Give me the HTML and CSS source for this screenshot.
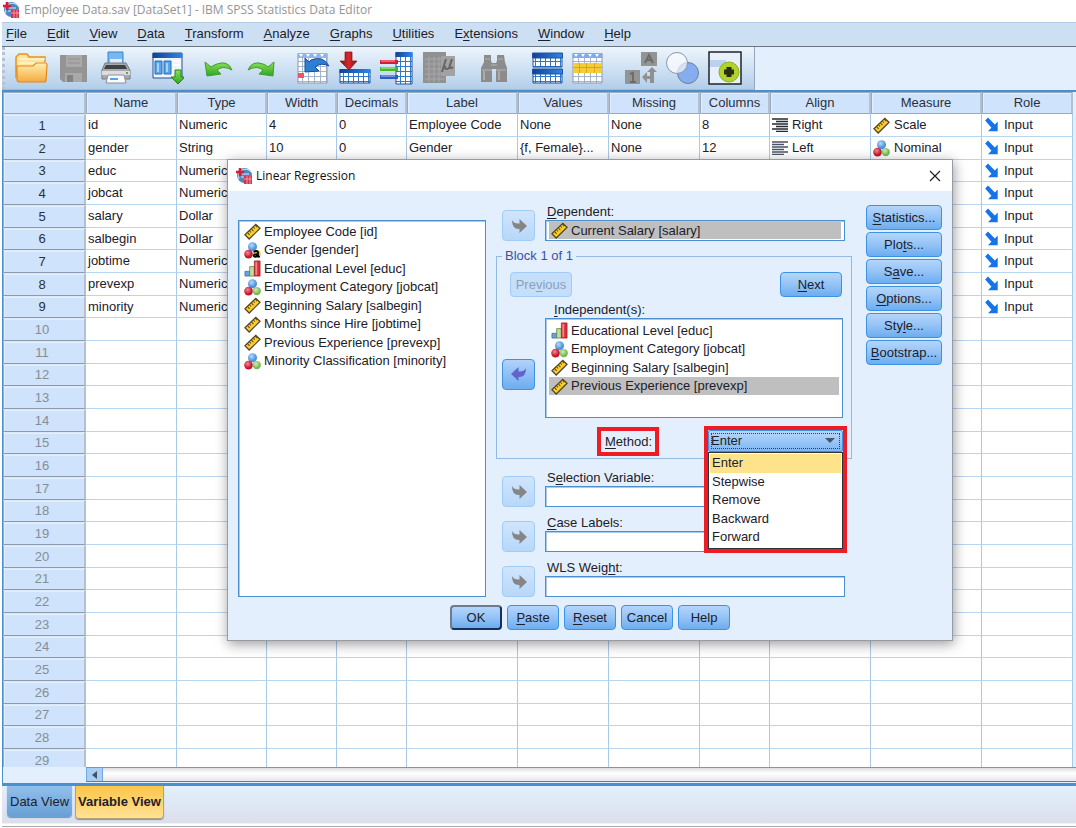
FILE: index.html
```html
<!DOCTYPE html>
<html lang="en">
<head>
<meta charset="utf-8">
<title>Employee Data.sav [DataSet1] - IBM SPSS Statistics Data Editor</title>
<link rel="stylesheet" href="styles.css">
</head>
<body>
<svg class="sprite" aria-hidden="true">
  <defs>
    <linearGradient id="g-blue" x1="0" x2="1"><stop offset="0" stop-color="#143f94"/><stop offset="1" stop-color="#2d86e8"/></linearGradient>
    <linearGradient id="g-gold" x1="0" x2="0" y1="0" y2="1"><stop offset="0" stop-color="#fff0b0"/><stop offset="1" stop-color="#f5a93c"/></linearGradient>
    <linearGradient id="g-green" x1="0" x2="0" y1="0" y2="1"><stop offset="0" stop-color="#8be05a"/><stop offset="1" stop-color="#2fa51f"/></linearGradient>
    <linearGradient id="g-red" x1="0" x2="1"><stop offset="0" stop-color="#7e1414"/><stop offset=".5" stop-color="#d8262c"/><stop offset="1" stop-color="#8c1818"/></linearGradient>
    <radialGradient id="g-rball" cx=".4" cy=".35"><stop offset="0" stop-color="#f08a8a"/><stop offset="1" stop-color="#c3152c"/></radialGradient>
    <radialGradient id="g-bball" cx=".4" cy=".35"><stop offset="0" stop-color="#b5dbfb"/><stop offset="1" stop-color="#4c93dd"/></radialGradient>
    <radialGradient id="g-gball" cx=".4" cy=".35"><stop offset="0" stop-color="#d0efb0"/><stop offset="1" stop-color="#74b853"/></radialGradient>
    <pattern id="p-grid" width="5" height="5" patternUnits="userSpaceOnUse"><path d="M0 0h5v5h-5z" fill="#fff"/><path d="M0 .5h5M.5 0v5" stroke="#2f78cc"/></pattern>
    <pattern id="p-light" width="6" height="5" patternUnits="userSpaceOnUse"><path d="M0 0h6v5h-6z" fill="#fff"/><path d="M0 .5h6M.5 0v5" stroke="#a3b4cc"/></pattern>
  </defs>
  <symbol id="i-app" viewBox="0 0 18 18">
    <circle cx="9.500" cy="8.500" r="7.500" fill="#4f86c0"/><path d="M4 12a7 7 0 0 1 12-7M7 7h7M6 10h5" stroke="#d5e8f8" fill="none"/>
    <path d="M5 1v8M1 5h8" stroke="#d31f33" stroke-width="2.500"/><path d="M9 9h8v8H9z" fill="#d2334c"/><path d="M9 12h8M12 9v8M15 9v8" stroke="#f5b0bb" stroke-width=".8"/>
  </symbol>
  <symbol id="i-scale" viewBox="0 0 18 18">
    <path d="M1 12.500 12.500 1.500 17 5.500 5.500 17z" fill="#ffce2e" stroke="#4f4524" stroke-width="1.300"/>
    <path d="m4 10.500 2 2m0-4 1.500 1.500M8 6.500l2 2m0-4 1.500 1.500M12 2.500l2 2" stroke="#5b4a12" stroke-width="1.100"/>
  </symbol>
  <symbol id="i-nominal" viewBox="0 0 18 18">
    <circle cx="9" cy="5" r="4.800" fill="url(#g-bball)"/><circle cx="4.800" cy="12.800" r="4.600" fill="url(#g-rball)"/><circle cx="13.500" cy="12.800" r="4.400" fill="url(#g-gball)"/>
  </symbol>
  <symbol id="i-string" viewBox="0 0 18 18">
    <circle cx="9" cy="5" r="4.800" fill="url(#g-bball)"/><circle cx="4.800" cy="12.800" r="4.600" fill="url(#g-rball)"/><circle cx="13.500" cy="12.800" r="4.200" fill="#e5c25a"/>
    <path d="M10.300 10.500q2.700-2 4.500 0v5.700M14.800 13q-4.800-.3-4.600 1.700 1.200 2.300 4.600-.4l1.700 2" fill="none" stroke="#000" stroke-width="1.900"/>
  </symbol>
  <symbol id="i-ordinal" viewBox="0 0 18 18">
    <path d="M1 12h5v5H1z" fill="#69a3dd" stroke="#3d6a99" stroke-width=".8"/><path d="M6 7h5v10H6z" fill="#bfe09d" stroke="#5d7d45" stroke-width=".8"/><path d="M11 1h6v16h-6z" fill="#dd2c35" stroke="#9a2129" stroke-width=".8"/><path d="M12 2h2v14h-2z" fill="#f3868a"/>
  </symbol>
  <symbol id="i-input" viewBox="0 0 14 14">
    <path d="M1 3 3.500.5l6 6L12 4v8.500H3.500L6.500 9.500z" fill="#1674ea"/>
  </symbol>
  <symbol id="i-right" viewBox="0 0 16 14">
    <path d="M0 1h16M4 3.500h12M0 6h16M4 8.500h12M0 11h16M4 13.500h12" stroke="#252b33" stroke-width="1.300"/>
  </symbol>
  <symbol id="i-left" viewBox="0 0 16 14">
    <path d="M0 1h16M0 3.500h12M0 6h16M0 8.500h12M0 11h16M0 13.500h12" stroke="#4a5463" stroke-width="1.300"/>
  </symbol>
  <symbol id="i-move" viewBox="0 0 16 14">
    <path d="M1 1q2 4 7.500 3.500V0L16 7l-7.500 7V10Q1 10.500 1 1z" fill="currentColor"/>
  </symbol>
</svg>

<header class="titlebar">
  <svg class="app-icon" aria-hidden="true"><use href="#i-app"/></svg>
  <h1 class="window-title">Employee Data.sav [DataSet1] - IBM SPSS Statistics Data Editor</h1>
</header>

<main class="workspace">
  <nav class="menubar" aria-label="Main menu">
    <button class="menu"><u>F</u>ile</button><button class="menu"><u>E</u>dit</button><button class="menu"><u>V</u>iew</button><button class="menu"><u>D</u>ata</button><button class="menu"><u>T</u>ransform</button><button class="menu"><u>A</u>nalyze</button><button class="menu"><u>G</u>raphs</button><button class="menu"><u>U</u>tilities</button><button class="menu">E<u>x</u>tensions</button><button class="menu"><u>W</u>indow</button><button class="menu"><u>H</u>elp</button>
  </nav>

  <div class="toolbar-row">
    <div class="toolbar" role="toolbar" aria-label="Data editor tools">
      <div class="tools">
        <button class="tool" aria-label="Open"><svg viewBox="0 0 34 34"><path d="M2 27V6l3-3h8l2 3h16v7" fill="#ffe5a0" stroke="#e8921c" stroke-width="1.500"/><path d="M5 12h27M5 8h26" stroke="#fff4cd" stroke-width="1.500"/><path d="M3 15h16l3-3h10q1 0 1 2l-1 15q0 2-2 2H5q-2 0-2-3z" fill="url(#g-gold)" stroke="#e8861a" stroke-width="1.200"/></svg></button>
        <button class="tool" aria-label="Save" disabled><svg viewBox="0 0 34 34"><path d="M4 4h27v27H7l-3-3z" fill="#949494"/><path d="M10 4h16v12H10zM9 22h17v9H9z" fill="#a9a9a9"/><path d="M11 24h6v7h-6z" fill="#828282"/><path d="M12 8h12M12 12h12" stroke="#919191"/></svg></button>
        <button class="tool" aria-label="Print"><svg viewBox="0 0 34 34"><path d="M10 1h15v14H10z" fill="#79b7ee" stroke="#3585cd"/><path d="M12 8h12v7H12z" fill="#d9eefd"/><path d="M7 12h21l4 7v9H4v-9z" fill="#a9abae" stroke="#77797d"/><path d="M8 14h19l2 4H6z" fill="#3e4247"/><path d="M4 20h28v4H4z" fill="#dcdddf"/><path d="M10 24h16l2 8H8z" fill="#f8fafc" stroke="#8b9097"/><path d="M12 28h8" stroke="#58a4e3" stroke-width="2"/><path d="M28 22h2" stroke="#4cae4c" stroke-width="2"/></svg></button>
      </div>
      <div class="tools">
        <button class="tool" aria-label="Recall recent dialog"><svg viewBox="0 0 34 34"><path d="M3 2h29v25H3z" fill="#eef5fc" stroke="#284f8f"/><path d="M2.500 2h30v5h-30z" fill="url(#g-blue)"/><path d="M5 10h7v13H5zM14 10h7v13h-7z" fill="#57a4e8" stroke="#2c6dbb"/><path d="M7 12h2v9H7zM16 12h2v9h-2z" fill="#a7d3f6"/><path d="M23 10h7M23 14h7" stroke="#fff" stroke-width="2"/><path d="M25 19h6v7h4l-7 7-7-7h4z" fill="url(#g-green)" stroke="#298018"/></svg></button>
      </div>
      <div class="tools">
        <button class="tool" aria-label="Undo"><svg viewBox="0 0 34 34"><path d="M3 11l2 14 14-2-4-4q6-5 15 0-4-10-15-6-3 1-6 3z" fill="url(#g-green)" stroke="#3f9d2e"/></svg></button>
        <button class="tool" aria-label="Redo"><svg viewBox="0 0 34 34"><path d="M30 11l-1 14-14-2 4-4q-6-5-15 0 4-10 15-6 3 1 5 3z" fill="url(#g-green)" stroke="#3f9d2e"/></svg></button>
      </div>
      <div class="tools">
        <button class="tool" aria-label="Go to case"><svg viewBox="0 0 34 34"><path d="M2 3h29v29H2z" fill="url(#p-light)" stroke="#9099ad"/><path d="M1.500 2h30v5h-30z" fill="#8fb5f0"/><path d="M3 3h4l-2 3zm7 0h4l-2 3zm7 0h4l-2 3zm7 0h4l-2 3z" fill="#fff"/><path d="M2 22h6v5H2z" fill="#ee5757"/><path d="M9 7v14l14-1-4-4q6-5 14-1-6-11-18-6l-2 2z" fill="#2e7ed4" stroke="#1a4c94"/></svg></button>
        <button class="tool" aria-label="Go to variable"><svg viewBox="0 0 34 34"><path d="M2 19h30v13H2z" fill="url(#p-grid)" stroke="#1e51a0"/><path d="M1.500 18h31v4h-31z" fill="url(#g-blue)"/><path d="M7 1h7v9h5l-8 9-9-9h5z" fill="url(#g-red)" stroke="#7b1717" stroke-width=".7"/></svg></button>
        <button class="tool" aria-label="Variables"><svg viewBox="0 0 34 34"><path d="M16 2h16v31H16z" fill="url(#p-grid)" stroke="#1e51a0"/><path d="M15.500 1h17v5h-17z" fill="url(#g-blue)"/><path d="M0 9h18v4H0z" fill="#d51d35"/><path d="M0 16h18v4H0z" fill="#45b92c"/><path d="M0 24h18v4H0z" fill="#2e5fc0"/><path d="M1 10h14" stroke="#f9a6ae"/><path d="M1 17h14" stroke="#c2f4a5"/><path d="M1 25h14" stroke="#a8c4f6"/></svg></button>
        <button class="tool" aria-label="Run descriptive statistics" disabled><svg viewBox="0 0 34 34"><path d="M1 1h23v31H1z" fill="#919191"/><path d="M3 8h20M3 13h20M3 18h20M3 23h20M3 28h20M7 6v25M12 6v25M17 6v25" stroke="#a8a8a8"/><path d="M19 5h14v20H19z" fill="#a2a2a2"/><path d="M24 8l-4 13m3-6q0 5 4 2l3-9m-2 6q-1 5 3 2" fill="none" stroke="#666" stroke-width="2"/></svg></button>
      </div>
      <div class="tools tools-single">
        <button class="tool" aria-label="Find" disabled><svg viewBox="0 0 34 34"><path d="M8 4h7v6l1 2h4l1-2V4h7l1 7 2 6v14H20V18h-4v13H5V17l3-6z" fill="#8c8c8c"/><path d="M6 19h10M20 19h10M9 8h5M22 8h5M15 14h6" stroke="#b5b5b5"/><path d="M8 20v9M23 20v9" stroke="#aaa" stroke-width="2"/></svg></button>
      </div>
      <div class="tools">
        <button class="tool" aria-label="Split file"><svg viewBox="0 0 34 34"><path d="M3 5h29v11H3zM3 22h29v10H3z" fill="url(#p-grid)" stroke="#21549e"/><path d="M2.500 2h30v5h-30zM2.500 18h30v5h-30z" fill="url(#g-blue)" stroke="#21549e"/></svg></button>
        <button class="tool" aria-label="Select cases"><svg viewBox="0 0 34 34"><path d="M1 3h29v29H1z" fill="url(#p-light)" stroke="#9099ad"/><path d="M.5 2h30v5h-30z" fill="#7faaf0"/><path d="M2 3h4l-2 3zm7 0h4l-2 3zm7 0h4l-2 3zm7 0h4l-2 3z" fill="#fff"/><path d="M1 12h29v10H1z" fill="#f4cc35"/><path d="M1 16.500h29M7.500 12v10M14.500 12v10M22.500 12v10" stroke="#dba71a"/></svg></button>
      </div>
      <div class="tools">
        <button class="tool" aria-label="Value labels" disabled><svg viewBox="0 0 34 34"><path d="M17 1h16v14H17zM1 19h15v14H1z" fill="#949494"/><path d="M21 12l4-8 4 8m-7-3h6M6 23l3-1v9m-3 0h6" stroke="#6c6c6c" stroke-width="2" fill="none"/><path d="M28 16l5 5h-3v11h-4v-4h-3v4l-5-6 5-5v4h3v-4h-3z" fill="#909090"/></svg></button>
        <button class="tool" aria-label="Use variable sets"><svg viewBox="0 0 34 34"><circle cx="22" cy="22" r="10.500" fill="#86adf0" stroke="#6a7f9f"/><circle cx="11" cy="12" r="10.500" fill="#fff" fill-opacity=".65" stroke="#8b98a9"/></svg></button>
        <button class="tool" aria-label="Customize toolbar"><svg viewBox="0 0 34 34"><path d="M1 1h32v32H1z" fill="#e8f0fa" stroke="#20232c" stroke-width="1.500"/><path d="M2 9h16v7H2z" fill="#b9d3ee"/><circle cx="21" cy="21" r="10" fill="#b2d12c" stroke="#8db026"/><path d="M21 16v10M16 21h10" stroke="#26300e" stroke-width="5"/></svg></button>
      </div>
    </div>
  </div>

  <div class="grid-area">
    <table class="grid">
      <colgroup><col class="w-num"><col class="w-90"><col class="w-89"><col class="w-70"><col class="w-70"><col class="w-110"><col class="w-90"><col class="w-90"><col class="w-70"><col class="w-100"><col class="w-110"><col class="w-90"><col></colgroup>
      <thead>
        <tr><th></th><th>Name</th><th>Type</th><th>Width</th><th>Decimals</th><th>Label</th><th>Values</th><th>Missing</th><th>Columns</th><th>Align</th><th>Measure</th><th>Role</th><td class="filler"></td></tr>
      </thead>
      <tbody id="variables"></tbody>
    </table>
  </div>

  <div class="scroll-row">
    <div class="scrollbar"><button class="scroll-left" aria-label="Scroll left"></button><div class="scroll-thumb"></div></div>
  </div>

  <footer class="views" role="tablist">
    <button class="view" role="tab" aria-selected="false">Data View</button>
    <button class="view view-active" role="tab" aria-selected="true">Variable View</button>
  </footer>
</main>

<section class="dialog" role="dialog" aria-labelledby="dialog-title">
  <header class="dialog-head">
    <svg class="app-icon" aria-hidden="true"><use href="#i-app"/></svg>
    <h2 class="dialog-title" id="dialog-title">Linear Regression</h2>
    <button class="close" aria-label="Close"><svg viewBox="0 0 12 12"><path d="m1 1 10 10M11 1 1 11" stroke="#222" stroke-width="1.200"/></svg></button>
  </header>
  <div class="dialog-body">
    <ul class="list source" aria-label="Variables">
      <li><svg class="icon"><use href="#i-scale"/></svg>Employee Code [id]</li>
      <li><svg class="icon"><use href="#i-string"/></svg>Gender [gender]</li>
      <li><svg class="icon"><use href="#i-ordinal"/></svg>Educational Level [educ]</li>
      <li><svg class="icon"><use href="#i-nominal"/></svg>Employment Category [jobcat]</li>
      <li><svg class="icon"><use href="#i-scale"/></svg>Beginning Salary [salbegin]</li>
      <li><svg class="icon"><use href="#i-scale"/></svg>Months since Hire [jobtime]</li>
      <li><svg class="icon"><use href="#i-scale"/></svg>Previous Experience [prevexp]</li>
      <li><svg class="icon"><use href="#i-nominal"/></svg>Minority Classification [minority]</li>
    </ul>

    <div class="fields">
      <div class="field-row">
        <button class="move" aria-label="Move to Dependent" disabled><svg><use href="#i-move"/></svg></button>
        <div class="field">
          <span class="label" id="l-dep"><u>D</u>ependent:</span>
          <div class="box" aria-labelledby="l-dep"><span class="chosen"><svg class="icon"><use href="#i-scale"/></svg>Current Salary [salary]</span></div>
        </div>
      </div>

      <fieldset class="block">
        <legend>Block 1 of 1</legend>
        <div class="block-nav">
          <button class="btn btn-nav" disabled>Pre<u>v</u>ious</button>
          <button class="btn btn-nav"><u>N</u>ext</button>
        </div>
        <div class="field-row middle">
          <button class="move move-active" aria-label="Remove from Independent"><svg><use href="#i-move"/></svg></button>
          <div class="field">
            <span class="label label-indent" id="l-ind"><u>I</u>ndependent(s):</span>
            <ul class="list targets" aria-labelledby="l-ind">
              <li><svg class="icon"><use href="#i-ordinal"/></svg>Educational Level [educ]</li>
              <li><svg class="icon"><use href="#i-nominal"/></svg>Employment Category [jobcat]</li>
              <li><svg class="icon"><use href="#i-scale"/></svg>Beginning Salary [salbegin]</li>
              <li class="selected"><svg class="icon"><use href="#i-scale"/></svg>Previous Experience [prevexp]</li>
            </ul>
          </div>
        </div>
        <div class="method">
          <label class="method-label" for="method"><u>M</u>ethod:</label>
          <div class="combo">
            <select id="method" class="select"><option>Enter</option><option>Stepwise</option><option>Remove</option><option>Backward</option><option>Forward</option></select>
            <ul class="options" role="listbox" aria-label="Method options">
              <li class="current" role="option" aria-selected="true">Enter</li><li role="option">Stepwise</li><li role="option">Remove</li><li role="option">Backward</li><li role="option">Forward</li>
            </ul>
          </div>
        </div>
      </fieldset>

      <div class="extra">
        <div class="field-row">
          <button class="move" aria-label="Move to Selection Variable" disabled><svg><use href="#i-move"/></svg></button>
          <div class="field"><label class="label" for="f-sel">S<u>e</u>lection Variable:</label><input class="box" id="f-sel" type="text"></div>
        </div>
        <div class="field-row">
          <button class="move" aria-label="Move to Case Labels" disabled><svg><use href="#i-move"/></svg></button>
          <div class="field"><label class="label" for="f-case"><u>C</u>ase Labels:</label><input class="box" id="f-case" type="text"></div>
        </div>
        <div class="field-row">
          <button class="move" aria-label="Move to WLS Weight" disabled><svg><use href="#i-move"/></svg></button>
          <div class="field"><label class="label" for="f-wls">WLS Weig<u>h</u>t:</label><input class="box" id="f-wls" type="text"></div>
        </div>
      </div>
    </div>

    <div class="side">
      <button class="btn"><u>S</u>tatistics...</button>
      <button class="btn">Plo<u>t</u>s...</button>
      <button class="btn">S<u>a</u>ve...</button>
      <button class="btn"><u>O</u>ptions...</button>
      <button class="btn">Sty<u>l</u>e...</button>
      <button class="btn"><u>B</u>ootstrap...</button>
    </div>
  </div>
  <footer class="dialog-foot">
    <button class="btn btn-default">OK</button>
    <button class="btn"><u>P</u>aste</button>
    <button class="btn"><u>R</u>eset</button>
    <button class="btn">Cancel</button>
    <button class="btn">Help</button>
  </footer>
</section>
<script src="grid.js"></script>
</body>
</html>
```

FILE: styles.css
```css
* { box-sizing: border-box; }

body {
  margin: 0;
  height: 100vh;
  display: flex;
  flex-direction: column;
  position: relative;
  overflow: hidden;
  background: #fff;
  color: #1c2029;
  font: 13px/16px "Liberation Sans", Arial, sans-serif;
}

button, input, select { font: inherit; color: inherit; margin: 0; padding: 0; }
button { border: 0; background: none; white-space: nowrap; }
ul { margin: 0; padding: 0; list-style: none; }
u { text-underline-offset: 2px; }
.sprite { position: absolute; width: 0; height: 0; }

/* Window frame */
.titlebar { display: flex; align-items: center; gap: 4px; height: 22px; padding: 0 2px 2px; }
.app-icon { width: 18px; height: 18px; flex: none; }
.window-title, .dialog-title { margin: 0; font: 12px/18px "Open Sans", "Noto Sans", sans-serif; }
.window-title { color: #949494; }
.workspace { flex: 1; min-height: 0; display: flex; flex-direction: column; padding: 0 0 1px 2px; }

.menubar {
  display: flex;
  gap: 20px;
  height: 25px;
  padding: 0 4px 1px;
  background: #cde0f3;
  border-top: 1px solid #b5cbe2;
  border-bottom: 1px solid #6d7580;
}

.toolbar-row { background: #e3effc; }
.toolbar {
  display: inline-flex;
  align-items: center;
  gap: 18px;
  height: 43px;
  vertical-align: top;
  padding: 0 12px 0 9px;
  border-left: 3px dotted #b4c3d4;
  border-right: 1px solid #97a7bb;
  border-bottom: 1px solid #a9bacd;
  background: linear-gradient(#edf5fd, #b3cee9);
}
.tools { display: flex; gap: 8px; }
.tools-single { padding: 0 2px; }
.tool { width: 34px; height: 34px; }
.tool svg { display: block; width: 34px; height: 34px; }

/* Variable grid */
.grid-area {
  flex: 1;
  min-height: 0;
  overflow: hidden;
  border-top: 2px solid #4a8fd0;
  border-left: 1px solid #4a8fd0;
  background: #e3effc;
}
.grid { width: 100%; table-layout: fixed; border-collapse: separate; border-spacing: 0; }
.w-num { width: 83px; }
.w-70 { width: 70px; }
.w-89 { width: 90px; }
.w-90 { width: 91px; }
.w-100 { width: 101px; }
.w-110 { width: 111px; }
.grid th {
  height: 22px;
  padding: 0;
  font-weight: normal;
  color: #2a303c;
  background: #cfe3fc;
  border: 1px solid #9ca9ba;
  border-right-width: 2px;
  border-right-color: #b1c1d3;
  box-shadow: inset 1px 1px #e3effc;
}
.grid td {
  padding: 0 2px;
  white-space: nowrap;
  overflow: hidden;
  background: #fff;
  border-right: 1px solid #a9c9e8;
  border-bottom: 1px solid #b9d6ef;
}
.grid tbody tr { height: 23px; }
.grid tbody tr:nth-child(3n) { height: 22px; }
.grid tbody th { height: auto; padding-right: 4px; border-top-color: #dbe8f6; border-bottom-color: #8c9aad; }
.grid .empty th { color: #858d98; }
.grid .filler { background: #e3effc; border: 0; padding: 0; }
.grid .with-icon { display: flex; align-items: center; gap: 4px; height: 16px; }
.glyph { width: 16px; height: 14px; }
.arrow { width: 16px; height: 16px; }
.icon { width: 17px; height: 17px; flex: none; }

.scroll-row { height: 16px; padding-left: 83px; background: #e3effc; border-left: 1px solid #4a8fd0; }
.scrollbar { display: flex; height: 15px; border-top: 1px solid #5d9ddb; border-bottom: 1px solid #6b7b8e; }
.scroll-left { display: grid; place-items: center; width: 17px; background: #a9cdf3; border: 1px solid #6ea9e3; border-width: 0 1px; }
.scroll-left::before { content: ""; border: 4px solid transparent; border-right: 5px solid #405266; border-left: 0; }
.scroll-thumb { flex: 1; background: linear-gradient(#dedede, #fff 40%, #e6e6e6); }

.views {
  display: flex;
  align-items: flex-start;
  gap: 3px;
  height: 44px;
  padding: 0 5px;
  border-top: 3px solid #4a8fd0;
  border-bottom: 1px solid #a4a8b0;
  background: linear-gradient(#e3f0fd, #dcdeeb 92%, #fff 95%);
}
.view { height: 31px; padding: 0 3px; background: linear-gradient(#92c0ea, #689fd4); border-radius: 0 0 4px 4px; box-shadow: 0 1px 1px #7595b7; }
.view-active { height: 33px; padding: 0 2px; font-weight: bold; background: linear-gradient(#fdc548, #ffe195); border: 1px solid #b7a276; border-top: 0; }

/* Linear Regression dialog */
.dialog {
  position: absolute;
  left: 227px;
  top: 159px;
  width: 726px;
  border: 1px solid #969ca4;
  background: #e3effc;
  box-shadow: 1px 3px 12px rgba(0, 0, 0, .4);
}
.dialog-head { display: flex; align-items: center; gap: 3px; height: 31px; padding: 0 11px 0 7px; background: #fff; }
.dialog-title { color: #111; }
.close { margin-left: auto; width: 12px; height: 12px; }
.close svg { display: block; }
.dialog-body { display: grid; grid-template-columns: 248px 1fr 76px; padding: 13px 10px 0; }

.list { background: #fff; border: 1px solid #4a8fd0; box-shadow: inset 1px 1px #a6cbee; padding: 2px 3px; }
.list li { display: flex; align-items: center; gap: 3px; height: 19px; padding-left: 2px; white-space: nowrap; }
.list li:nth-child(even) { height: 18px; }
.list .selected { background: #bfbfbf; }
.source { margin-top: 16px; padding-top: 1px; }

.fields { margin: 0 14px 0 10px; }
.field-row { display: flex; align-items: flex-end; gap: 10px; padding: 0 7px 0 6px; }
.field { flex: 1; min-width: 0; display: flex; flex-direction: column; }
.label { line-height: 16px; padding-left: 2px; }
.label-indent { padding-left: 9px; }
.box { width: 100%; height: 21px; padding: 1px 3px; background: #fff; border: 1px solid #4a8fd0; border-radius: 0; box-shadow: inset 1px 1px #a6cbee; }
.chosen { display: flex; align-items: center; gap: 3px; height: 17px; padding-left: 2px; background: #bfbfbf; }

.move {
  display: grid;
  place-items: center;
  width: 33px;
  height: 31px;
  flex: none;
  border: 1px solid #9fcdf7;
  border-radius: 4px;
  background: linear-gradient(#d0e5fd, #b7d7f9);
  color: #858585;
}
.move svg { width: 16px; height: 14px; }
.move-active { border-color: #3d92e4; background: linear-gradient(#b1d3fa, #6cadf0); color: #6463cc; }
.move-active svg { transform: scaleX(-1); }

.block { min-width: 0; margin: 7px 0 0; padding: 8px 8px 6px 0; border: 1px solid #93bbe2; }
.block legend { margin-left: 5px; padding: 0 3px; color: #3a4fa6; }
.block-nav { display: flex; justify-content: space-between; padding: 0 1px 0 13px; }
.block .field-row { padding: 5px 0 0 5px; }
.middle .move { align-self: center; margin-top: 28px; }
.block .middle { align-items: stretch; }
.targets { height: 100px; }
.method { display: flex; align-items: center; justify-content: flex-end; gap: 45px; margin: 8px 0 -4px; }
.method-label { border: 4px solid #ee1c25; padding: 3px 3px 2px 4px; }
.combo { position: relative; width: 143px; height: 30px; margin-right: -4px; padding: 4px 4px 0; }
.combo::after { content: ""; position: absolute; inset: 0 0 -97px; border: 4px solid #ee1c25; z-index: 2; pointer-events: none; }
.select {
  display: block;
  width: 100%;
  height: 22px;
  padding: 0 2px;
  appearance: none;
  border: 1px solid #3d92e4;
  border-radius: 2px;
  outline: 1px dotted #24436b;
  outline-offset: -4px;
  background: linear-gradient(to bottom, #b8d7fb, #7db6f2);
}
.combo::before { content: ""; position: absolute; right: 12px; top: 12px; border: 5px solid transparent; border-top-color: #4b5563; border-bottom: 0; }
.options { position: absolute; left: 4px; right: 4px; top: 26px; z-index: 1; padding: 1px; background: #fff; border: 1px solid #2c3138; }
.options li { height: 19px; padding: 1px 2px; }
.options li:nth-child(even) { height: 18px; }
.options .current { background: #ffe38a; }

.extra { display: grid; gap: 8px; margin-top: 11px; }

.side { display: grid; gap: 2px; align-content: start; padding-top: 1px; }
.btn {
  height: 25px;
  border: 1px solid #3d92e4;
  border-radius: 4px;
  background: linear-gradient(#b4d5fb, #94c3f6 50%, #6cadf0);
}
.btn:disabled { color: #8ba0b8; border-color: #9fcdf7; background: #c5dffb; }
.btn-nav { width: 62px; }
.dialog-foot { display: flex; justify-content: center; gap: 5px; padding: 8px 0 10px; }
.dialog-foot .btn { width: 52px; }
.dialog-foot .btn-default { border: 2px solid #16305c; border-top-color: #6f7b8c; border-left-color: #6f7b8c; }
```

FILE: grid.js
```js
const withIcon = (name, cls, text) =>
  `<span class="with-icon"><svg class="${cls}" aria-hidden="true"><use href="#i-${name}"/></svg>${text}</span>`;
const input = withIcon("input", "arrow", "Input");
const rows = [
  ["id", "Numeric", "4", "0", "Employee Code", "None", "None", "8", withIcon("right", "glyph", "Right"), withIcon("scale", "icon", "Scale"), input],
  ["gender", "String", "10", "0", "Gender", "{f, Female}...", "None", "12", withIcon("left", "glyph", "Left"), withIcon("nominal", "icon", "Nominal"), input],
  ...[["educ", "Numeric"], ["jobcat", "Numeric"], ["salary", "Dollar"], ["salbegin", "Dollar"], ["jobtime", "Numeric"], ["prevexp", "Numeric"], ["minority", "Numeric"]]
    .map(([name, type]) => [name, type, "", "", "", "", "", "", "", "", input])
];
let html = "";
for (let n = 1; n <= 29; n++) {
  const cells = rows[n - 1] || Array(11).fill("");
  html += `<tr class="${rows[n - 1] ? "" : "empty"}"><th>${n}</th>${cells.map(c => `<td>${c}</td>`).join("")}<td class="filler"></td></tr>`;
}
document.getElementById("variables").innerHTML = html;
```
